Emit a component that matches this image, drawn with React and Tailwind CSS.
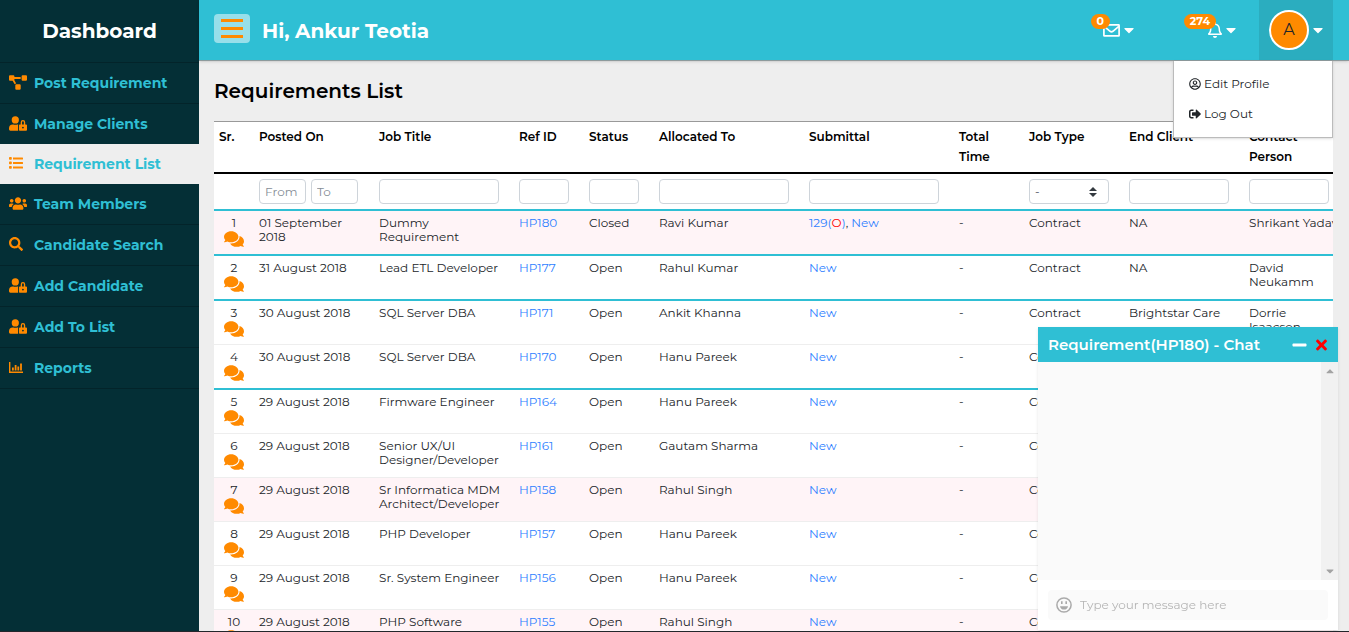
import React from "react";
import {
  FaProjectDiagram, FaUserLock, FaUsers, FaSearch, FaComments,
  FaRegUserCircle, FaSignOutAlt, FaTimes, FaCaretDown, FaCaretUp, FaRegBell, FaMinus,
} from "react-icons/fa";

function BarChartIcon({ className }) {
  return (
    <svg viewBox="0 0 14 11" className={className} fill="currentColor" aria-hidden="true">
      <path d="M0 0h1.4v9.6H14V11H0zM3 5.6h1.8v3H3zM5.7 3h1.8v5.6H5.7zM8.4 4.4h1.8v4.2H8.4zM11.1 1.4h1.8v7.2h-1.8z" />
    </svg>
  );
}

function ListIcon({ className }) {
  return (
    <svg viewBox="0 0 14 12" className={className} fill="currentColor" aria-hidden="true">
      <path d="M4 .4h9.5q.5 0 .5.5v1q0 .5-.5.5H4zM4 4.9h9.5q.5 0 .5.5v1q0 .5-.5.5H4zM4 9.4h9.5q.5 0 .5.5v1q0 .5-.5.5H4z" />
      <rect x="0" y="0" width="2.8" height="2.8" rx="0.8" />
      <rect x="0" y="4.5" width="2.8" height="2.8" rx="0.8" />
      <rect x="0" y="9" width="2.8" height="2.8" rx="0.8" />
    </svg>
  );
}

function EnvelopeIcon({ className }) {
  return (
    <svg viewBox="0 0 17 13" className={className} fill="none" stroke="currentColor" strokeWidth="1.7" aria-hidden="true">
      <rect x="0.9" y="0.9" width="15.2" height="11" rx="0.5" />
      <path d="M1.2 2.4l5.9 4.9q1.4 1 2.8 0l5.9-4.9" />
    </svg>
  );
}

function SmileyIcon({ className }) {
  return (
    <svg viewBox="0 0 16 16" className={className} fill="none" stroke="currentColor" strokeWidth="1.5" aria-hidden="true">
      <circle cx="8" cy="8" r="7.1" />
      <path d="M5.8 4.2v2.8M10.2 4.2v2.8" strokeWidth="1.6" />
      <path d="M4 9.2h8q-.7 3.4-4 3.4T4 9.2z" fill="currentColor" stroke="none" />
    </svg>
  );
}

const NAV = [
  { label: "Post Requirement", Icon: FaProjectDiagram, size: "w-[18px] h-[15px]", line: true },
  { label: "Manage Clients", Icon: FaUserLock, size: "w-[18px] h-[15px]", line: true },
  { label: "Requirement List", Icon: ListIcon, size: "w-[14px] h-[12px]", active: true },
  { label: "Team Members", Icon: FaUsers, size: "w-[18px] h-[15px]" },
  { label: "Candidate Search", Icon: FaSearch, size: "w-[14px] h-[14px]", line: true },
  { label: "Add Candidate", Icon: FaUserLock, size: "w-[18px] h-[15px]", line: true },
  { label: "Add To List", Icon: FaUserLock, size: "w-[18px] h-[15px]", line: true },
  { label: "Reports", Icon: BarChartIcon, size: "w-[14px] h-[11px]", line: true },
];

const COLUMNS = [
  { label: "Sr.", col: "w-[40px]" },
  { label: "Posted On", col: "w-[120px]" },
  { label: "Job Title", col: "w-[140px]", field: "w-[120px]" },
  { label: "Ref ID", col: "w-[70px]", field: "w-[50px]" },
  { label: "Status", col: "w-[70px]", field: "w-[50px]" },
  { label: "Allocated To", col: "w-[150px]", field: "w-[130px]" },
  { label: "Submittal", col: "w-[150px]", field: "w-[130px]" },
  { label: "Total\nTime", col: "w-[70px]" },
  { label: "Job Type", col: "w-[100px]", field: "w-[80px]" },
  { label: "End Client", col: "w-[120px]", field: "w-[100px]" },
  { label: "Contact\nPerson", col: "w-[100px]", field: "w-[80px]" },
];

const ROWS = [
  { date: "01 September\n2018", title: "Dummy\nRequirement", id: "HP180", status: "Closed", to: "Ravi Kumar", count: 129, client: "NA", contact: "Shrikant Yadav", pink: true, strong: true },
  { date: "31 August 2018", title: "Lead ETL Developer", id: "HP177", status: "Open", to: "Rahul Kumar", client: "NA", contact: "David\nNeukamm", strong: true },
  { date: "30 August 2018", title: "SQL Server DBA", id: "HP171", status: "Open", to: "Ankit Khanna", client: "Brightstar Care", contact: "Dorrie\nIsaacson" },
  { date: "30 August 2018", title: "SQL Server DBA", id: "HP170", status: "Open", to: "Hanu Pareek", strong: true },
  { date: "29 August 2018", title: "Firmware Engineer", id: "HP164", status: "Open", to: "Hanu Pareek" },
  { date: "29 August 2018", title: "Senior UX/UI\nDesigner/Developer", id: "HP161", status: "Open", to: "Gautam Sharma" },
  { date: "29 August 2018", title: "Sr Informatica MDM\nArchitect/Developer", id: "HP158", status: "Open", to: "Rahul Singh", pink: true },
  { date: "29 August 2018", title: "PHP Developer", id: "HP157", status: "Open", to: "Hanu Pareek" },
  { date: "29 August 2018", title: "Sr. System Engineer", id: "HP156", status: "Open", to: "Hanu Pareek" },
  { date: "29 August 2018", title: "PHP Software\nDeveloper", id: "HP155", status: "Open", to: "Rahul Singh", pink: true },
];

const INPUT = "block h-[25px] rounded border border-[#ced4da] bg-white px-[5px] text-[12px] text-[#495057] placeholder-[#868e96]";

function Sidebar() {
  return (
    <aside className="w-[199px] shrink-0 bg-[#042f36]">
      <h1 className="flex h-[62px] items-center justify-center text-[20px] font-bold text-white">Dashboard</h1>
      <nav className="border-b border-[#03242a]">
        {NAV.map(({ label, Icon, size, active, line }) => (
          <a
            key={label}
            href="#"
            className={`flex items-center pl-[9px] text-[14px] font-bold text-[#2fbfd4] ${line ? "h-[41px] border-t border-[#03242a]" : "h-10"} ${active ? "bg-[#eee]" : ""}`}
          >
            <span className="w-[25px] shrink-0 pb-[2px] text-[#ff8a00]"><Icon className={size} /></span>
            {label}
          </a>
        ))}
      </nav>
    </aside>
  );
}

function Notice({ count, label, place, children }) {
  return (
    <button aria-label={label} className="relative flex items-center gap-1 text-white">
      <span className={`absolute bottom-[9px] flex h-[15px] items-center rounded-full bg-[#ff8a00] px-[6px] text-[11px] leading-none font-bold ${place}`}>{count}</span>
      {children}
      <FaCaretDown className="h-4 w-[10px]" preserveAspectRatio="none" />
    </button>
  );
}

function Header() {
  return (
    <header className="relative z-20 flex h-[61px] shrink-0 border-b border-[#8d9a9c] bg-[#2fbfd4] pr-4 pl-[15px] shadow-sm">
      <div className="flex flex-1 items-center">
        <button aria-label="Toggle menu" className="mb-[3px] flex h-[29px] w-9 items-center justify-center rounded bg-white/50">
          <svg viewBox="0 0 22 19" className="h-[19px] w-[22px]" fill="#ff8a00" aria-hidden="true">
            <path d="M0 0h22v3H0zM0 8h22v3H0zM0 16h22v3H0z" />
          </svg>
        </button>
        <h2 className="ml-3 pt-[2px] text-[20px] font-bold text-white">Hi, Ankur Teotia</h2>
      </div>
      <div className="mr-[23px] flex items-center gap-[74px]">
        <Notice count="0" label="Messages" place="right-6"><EnvelopeIcon className="h-[13px] w-[17px]" /></Notice>
        <Notice count="274" label="Notifications" place="right-5"><FaRegBell className="h-4 w-[14px]" /></Notice>
      </div>
      <div className="relative">
        <button aria-label="Account" className="flex h-[60px] w-[74px] items-center gap-1 bg-[#2badbf] pl-[10px] text-white">
          <span className="flex h-10 w-10 items-center justify-center rounded-full border-2 border-white bg-[#ff8a00] text-base text-[#212529]">A</span>
          <FaCaretDown className="h-4 w-[10px]" preserveAspectRatio="none" />
        </button>
        <div className="absolute top-[61px] right-0 flex h-[77px] w-[160px] flex-col border border-t-0 border-[#bbb] bg-white px-[15px] pt-2 text-[12px] text-[#212529] shadow-sm">
          <a href="#" className="flex h-[30px] items-center gap-[3px]"><FaRegUserCircle className="h-3 w-3" />Edit Profile</a>
          <a href="#" className="flex h-[30px] items-center gap-[3px]"><FaSignOutAlt className="h-3 w-3" />Log Out</a>
        </div>
      </div>
    </header>
  );
}

function FilterCell({ column }) {
  if (column.label === "Posted On")
    return (
      <div className="flex gap-[5px]">
        <input aria-label="Posted from" placeholder="From" className={`${INPUT} w-[47px]`} />
        <input aria-label="Posted to" placeholder="To" className={`${INPUT} w-[47px]`} />
      </div>
    );
  if (column.label === "Job Type")
    return (
      <div className="relative w-[80px]">
        <select aria-label="Job Type" className={`${INPUT} w-full appearance-none`}><option>-</option></select>
        <svg viewBox="0 0 8 10" className="pointer-events-none absolute top-[8px] right-3 h-[10px] w-2" fill="#343a40" aria-hidden="true">
          <path d="M4 0l4 4H0zM4 10L0 6h8z" />
        </svg>
      </div>
    );
  return column.field ? <input aria-label={column.label} className={`${INPUT} ${column.field}`} /> : null;
}

function RequirementsTable() {
  return (
    <div className="overflow-hidden border-t border-[#999] bg-white">
      <table className="w-[1130px] table-fixed border-separate border-spacing-0 text-left text-[12px]">
        <thead>
          <tr className="h-[52px] align-top leading-5">
            {COLUMNS.map((c) => (
              <th key={c.label} className={`${c.col} border-b-2 border-black px-[5px] pt-[5px] font-semibold whitespace-pre-line text-black`}>{c.label}</th>
            ))}
          </tr>
          <tr className="h-[37px]">
            {COLUMNS.map((c) => (
              <td key={c.label} className="border-b-2 border-[#2fbfd4] px-[5px]"><FilterCell column={c} /></td>
            ))}
          </tr>
        </thead>
        <tbody>
          {ROWS.map((r, i) => {
            const cell = `px-[5px] pt-[5px] whitespace-pre ${r.strong ? "border-b-2 border-[#2fbfd4]" : "border-b border-[#eee]"}`;
            return (
              <tr key={r.id} className={`align-top leading-[14px] text-[#212529] ${r.strong ? "h-[45px]" : "h-11"} ${r.pink ? "bg-[#fff4f7]" : ""}`}>
                <td className={cell}>
                  <div className="text-center">{i + 1}</div>
                  <button aria-label={`Chat about ${r.id}`} className="ml-[5px] block text-[#ff8a00]"><FaComments className="h-[18px] w-5" /></button>
                </td>
                <td className={cell}>{r.date}</td>
                <td className={cell}>{r.title}</td>
                <td className={cell}><a href="#" className="text-[#2f7fff]">{r.id}</a></td>
                <td className={cell}>{r.status}</td>
                <td className={cell}>{r.to}</td>
                <td className={cell}>
                  {r.count && <><a href="#" className="text-[#2f7fff]">{r.count}(<span className="text-[#f00]">O</span>)</a>, </>}
                  <a href="#" className="text-[#2f7fff]">New</a>
                </td>
                <td className={cell}>-</td>
                <td className={cell}>Contract</td>
                <td className={cell}>{r.client}</td>
                <td className={cell}>{r.contact}</td>
              </tr>
            );
          })}
        </tbody>
      </table>
    </div>
  );
}

function ChatBox() {
  return (
    <section className="fixed right-[11px] bottom-[2px] z-10 flex w-[300px] flex-col bg-white shadow">
      <div className="flex h-[35px] items-center bg-[#2fbfd4] px-[10px] text-white">
        <h3 className="flex-1 pt-[2px] text-[15px] font-semibold">Requirement(HP180) - Chat</h3>
        <button aria-label="Minimize"><FaMinus className="h-4 w-[15px]" /></button>
        <button aria-label="Close" className="ml-2 text-[#f00]"><FaTimes className="h-4 w-[13px]" /></button>
      </div>
      <div className="flex h-[218px] justify-end bg-[#fafafa]">
        <div className="flex w-[17px] flex-col items-center justify-between bg-[#f1f1f1] py-[3px] text-[#a3a3a3]">
          <FaCaretUp className="h-3 w-3" />
          <FaCaretDown className="h-3 w-3" />
        </div>
      </div>
      <div className="p-[10px]">
        <div className="flex h-[30px] items-center gap-2 rounded bg-[#fafafa] pl-2">
          <SmileyIcon className="h-4 w-4 text-[#aaa]" />
          <input aria-label="Message" placeholder="Type your message here" className="flex-1 bg-transparent text-[12px] placeholder-[#b5b5b5] outline-none" />
        </div>
      </div>
    </section>
  );
}

export default function App() {
  return (
    <div className="flex h-screen overflow-hidden bg-[#eee] font-['Montserrat','Inter',sans-serif]">
      <Sidebar />
      <div className="flex min-w-0 flex-1 flex-col">
        <Header />
        <main className="min-h-0 flex-1 overflow-hidden pr-4 pl-[15px]">
          <h2 className="flex h-[60px] items-center text-[20px] font-semibold text-black">Requirements List</h2>
          <RequirementsTable />
        </main>
      </div>
      <ChatBox />
      <div className="fixed inset-x-0 bottom-0 z-30 h-px bg-[#22262b]" />
    </div>
  );
}
